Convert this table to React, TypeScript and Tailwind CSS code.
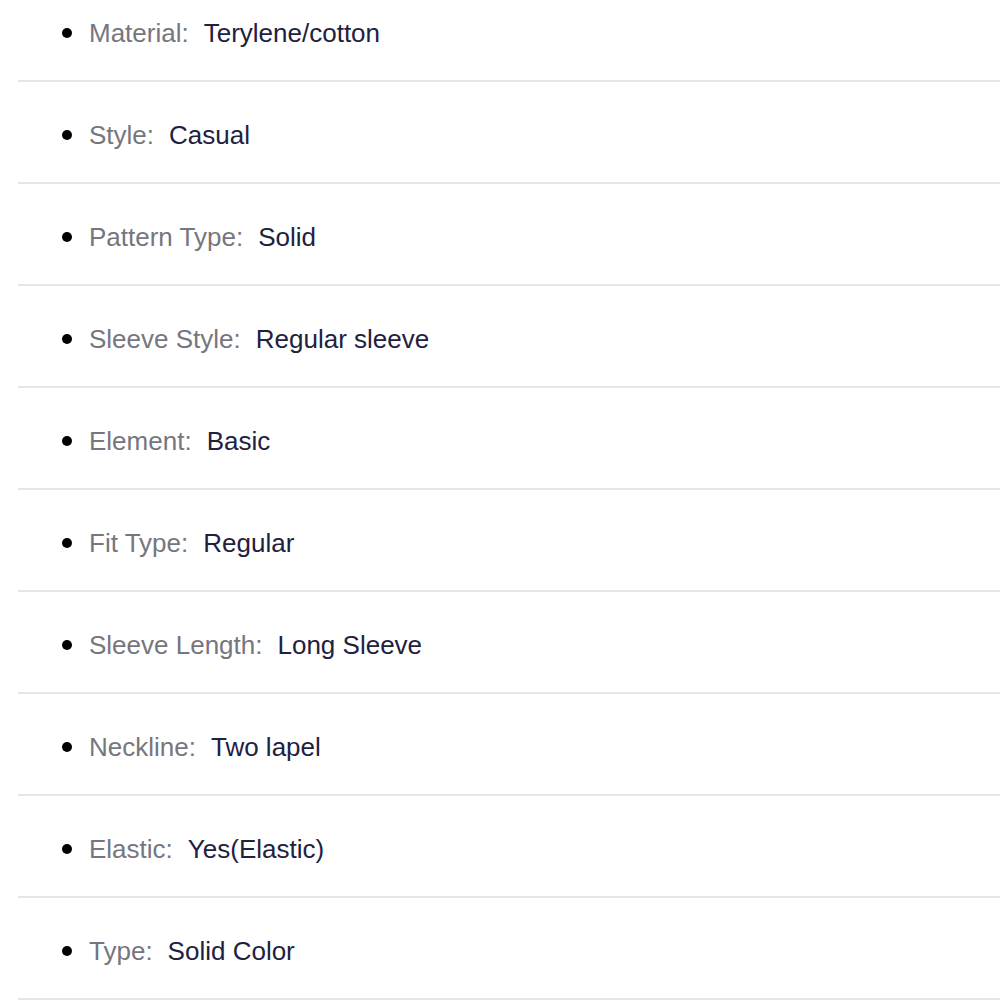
import React from "react";

const items: [string, string][] = [
  ["Material", "Terylene/cotton"],
  ["Style", "Casual"],
  ["Pattern Type", "Solid"],
  ["Sleeve Style", "Regular sleeve"],
  ["Element", "Basic"],
  ["Fit Type", "Regular"],
  ["Sleeve Length", "Long Sleeve"],
  ["Neckline", "Two lapel"],
  ["Elastic", "Yes(Elastic)"],
  ["Type", "Solid Color"],
];

export default function App() {
  return (
    <div className="w-[1000px] h-[1000px] overflow-hidden bg-white" style={{ fontFamily: '"Liberation Sans", Arial, sans-serif' }}>
      <ul className="-mt-[20px] pl-[18px]">
        {items.map(([k, v]) => (
          <li key={k} className="h-[102px] border-b-2 border-[#e6e6e6] flex items-center pt-[6px]">
            <span className="ml-[44px] w-[10px] h-[10px] rounded-full bg-black shrink-0" />
            <span className="ml-[17px] text-[26px] leading-none text-[#76767e]">{k}:</span>
            <span className="ml-[15px] text-[26px] leading-none text-[#1e2140]">{v}</span>
          </li>
        ))}
      </ul>
    </div>
  );
}
